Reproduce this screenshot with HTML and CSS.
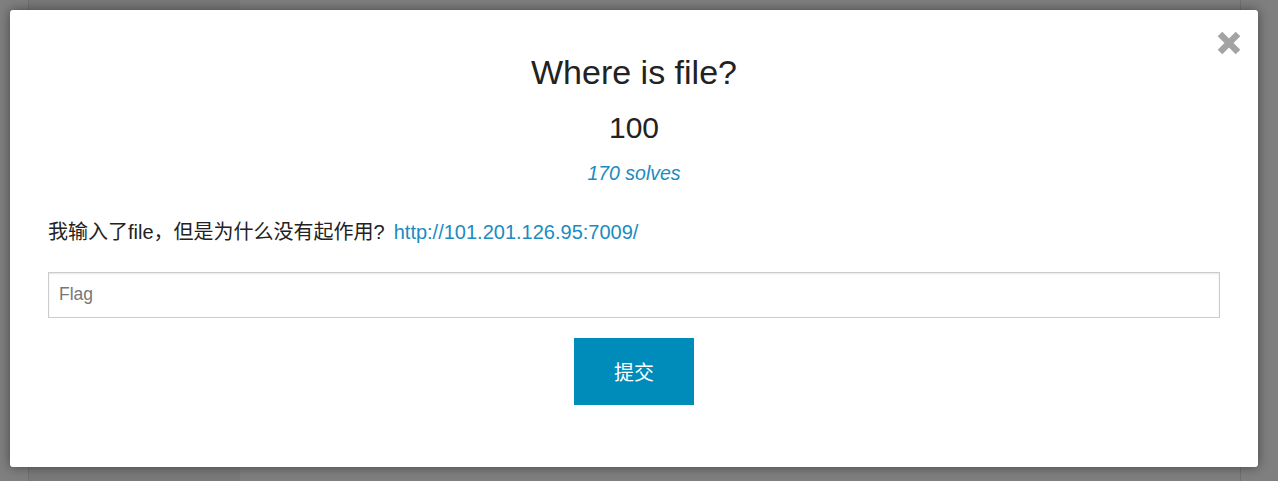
FILE: index.html
```html
<!DOCTYPE html>
<html lang="zh">
<head>
<meta charset="utf-8">
<title>Where is file?</title>
<link rel="stylesheet" href="styles.css">
</head>
<body>
<div class="backdrop-page">
  <div class="page-card"><div class="page-card-right"></div></div>
</div>
<div class="overlay">
  <div class="modal">
    <button class="close" aria-label="Close">
      <svg width="26" height="24" viewBox="0 0 26 24"><path d="M4 3 L22 21 M22 3 L4 21" stroke="#a3a3a3" stroke-width="6.5" stroke-linecap="butt" fill="none"/></svg>
    </button>
    <h2 class="title">Where is file?</h2>
    <h3 class="value">100</h3>
    <p class="solves">170 solves</p>
    <p class="desc">我输入了file，但是为什么没有起作用?<a class="link" href="#">http://101.201.126.95:7009/</a></p>
    <input class="flag" type="text" placeholder="Flag">
    <div class="actions"><button class="submit">提交</button></div>
  </div>
</div>
</body>
</html>
```

FILE: styles.css
```css
html, body {
  margin: 0;
  padding: 0;
  height: 100%;
  overflow: hidden;
}
body {
  background: #ffffff;
  font-family: "Liberation Sans", Arial, "Noto Sans CJK SC", sans-serif;
  position: relative;
}
.backdrop-page {
  height: 100%;
  padding-left: 28px;
}
.page-card {
  width: 1211px;
  height: 100%;
  border-left: 1px solid #e0e0e0;
  border-right: 1px solid #e0e0e0;
  background: #f4f4f4;
  display: flex;
  justify-content: flex-end;
}
.page-card-right {
  width: 1000px;
  background: #ffffff;
}
.overlay {
  position: absolute;
  inset: 0;
  background: rgba(0, 0, 0, 0.5);
  padding: 10px;
}
.modal {
  position: relative;
  width: 1248px;
  height: 457px;
  box-sizing: border-box;
  background: #ffffff;
  border-radius: 3px;
  box-shadow: 0 0 12px rgba(0, 0, 0, 0.45);
  padding: 42px 38px 0 38px;
  display: flex;
  flex-direction: column;
  align-items: center;
  color: #222222;
}
.close {
  position: absolute;
  top: 21px;
  right: 16px;
  padding: 0;
  margin: 0;
  border: 0;
  background: none;
  width: 26px;
  height: 24px;
  line-height: 0;
}
.title {
  margin: 0;
  font-size: 34px;
  font-weight: normal;
  line-height: 40px;
}
.value {
  margin: 18px 0 0 0;
  font-size: 30px;
  font-weight: normal;
  line-height: 36px;
}
.solves {
  margin: 14px 0 0 0;
  font-size: 19.5px;
  font-style: italic;
  line-height: 26.6px;
  color: #1b8bc0;
}
.desc {
  margin: 31px 0 0 0;
  align-self: stretch;
  font-size: 20px;
  line-height: 28px;
  color: #222222;
}
.link {
  margin-left: 9px;
  color: #1b8bc0;
  text-decoration: none;
}
.flag {
  margin-top: 26px;
  align-self: stretch;
  height: 46px;
  box-sizing: border-box;
  border: 1px solid #cccccc;
  box-shadow: inset 0 1px 2px rgba(0, 0, 0, 0.1);
  padding: 0 10px;
  font-family: "Liberation Sans", Arial, sans-serif;
  font-size: 17.5px;
  color: #222222;
  outline: none;
}
.flag::placeholder {
  color: #777777;
}
.actions {
  margin-top: 20px;
  display: flex;
  justify-content: center;
}
.submit {
  width: 120px;
  height: 67px;
  border: 0;
  background: #008cba;
  color: #ffffff;
  font-family: "Liberation Sans", "Noto Sans CJK SC", sans-serif;
  font-size: 20px;
  padding: 0;
}
```
